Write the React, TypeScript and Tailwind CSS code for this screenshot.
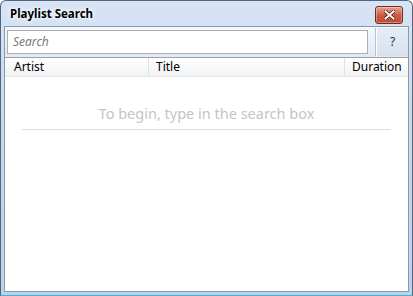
import { useState } from 'react'

export default function App() {
  const [query, setQuery] = useState('')

  return (
    <div className="w-[413px] h-[296px] overflow-hidden bg-white font-['Noto_Sans',sans-serif]">
      <div className="flex h-full flex-col rounded-t-[6px] border border-[#55657a] border-b-[#3fb6d8] bg-gradient-to-b from-[#d6e4f5] via-[#c5d8ee] to-[#bcd2ec]">
        {/* title bar */}
        <div className="flex h-[26px] shrink-0 items-center justify-between pl-[9px] pr-[9px]">
          <span className="text-[11.5px] font-bold text-black [text-shadow:0_0_6px_#fff,0_0_3px_#fff]">
            Playlist Search
          </span>
          <button
            type="button"
            aria-label="Close"
            className="mt-[1px] flex h-[18px] w-[28px] items-center justify-center rounded-[3px] border border-[#6b2a22] bg-gradient-to-b from-[#e8a493] via-[#cf5a42] to-[#c14a33] shadow-[inset_0_0_0_1px_rgba(255,255,255,0.35)]"
          >
            <svg width="11" height="10" viewBox="0 0 11 10">
              <path
                d="M1.5 1.5 L9.5 8.5 M9.5 1.5 L1.5 8.5"
                stroke="#4a1a14"
                strokeWidth="3.4"
                strokeLinecap="square"
              />
              <path
                d="M1.5 1.5 L9.5 8.5 M9.5 1.5 L1.5 8.5"
                stroke="#ffffff"
                strokeWidth="2"
                strokeLinecap="square"
              />
            </svg>
          </button>
        </div>

        {/* client area */}
        <div className="mx-[4px] mb-[4px] flex flex-1 flex-col bg-[#f3f6fa] shadow-[0_0_0_1px_#8b99ab]">
          {/* toolbar */}
          <div className="flex h-[30px] shrink-0 items-center bg-gradient-to-b from-[#f4f7fb] to-[#e3eaf3]">
            <div className="ml-[2px] flex h-[24px] flex-1 items-center border border-[#abadb3] bg-white px-[5px]">
              <input
                value={query}
                onChange={(event) => setQuery(event.target.value)}
                placeholder="Search"
                className="w-full bg-transparent text-[12px] italic text-black outline-none placeholder:text-[#7a7a7a]"
              />
            </div>
            <div className="ml-[7px] h-[28px] w-[2px] border-l border-r border-l-[#b9c3cf] border-r-white" />
            <button
              type="button"
              className="flex h-[28px] w-[31px] items-center justify-center bg-gradient-to-b from-[#e6ecf5] to-[#d8e1ed] text-[12px] text-[#1b2f5e]"
            >
              ?
            </button>
          </div>

          {/* list */}
          <div className="flex flex-1 flex-col border-t border-[#9aa3ad] bg-white">
            <div className="flex h-[19px] shrink-0 border-b border-[#e3e6ea] bg-gradient-to-b from-white to-[#f1f2f4] text-[12px] text-black">
              <div className="w-[144px] border-r border-[#dee1e5] pl-[9px] leading-[18px]">Artist</div>
              <div className="flex-1 border-r border-[#dee1e5] pl-[7px] leading-[18px]">Title</div>
              <div className="w-[63px] pl-[7px] leading-[18px]">Duration</div>
            </div>
            <div className="flex flex-col items-center px-[17px] pt-[26px]">
              <span className="text-[14.5px] leading-[20px] text-[#c5c5c5]">
                To begin, type in the search box
              </span>
              <div className="mt-[6px] h-px w-full bg-[#dedede]" />
            </div>
          </div>
        </div>
      </div>
    </div>
  )
}
